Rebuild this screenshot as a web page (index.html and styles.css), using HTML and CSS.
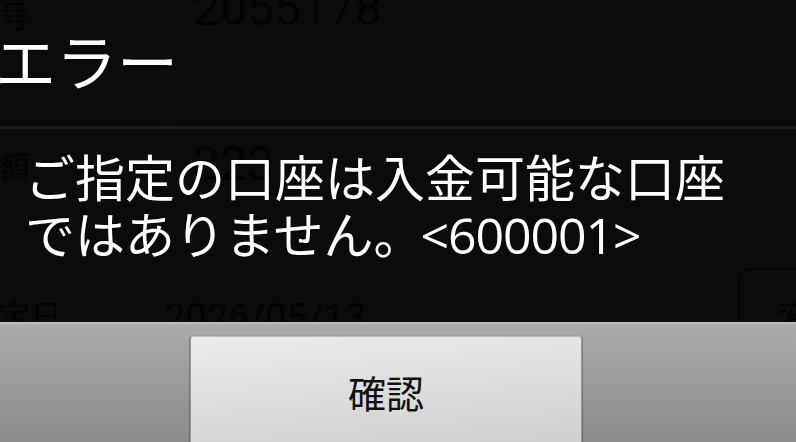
FILE: index.html
```html
<!DOCTYPE html>
<html lang="ja">
<head>
<meta charset="utf-8">
<link rel="stylesheet" href="styles.css">
</head>
<body>
<div class="screen">
  <div class="ghost">
    <div class="row row-1">
      <div class="g-label l1">号</div>
      <div class="g-value v1">2055178</div>
    </div>
    <div class="divider"></div>
    <div class="row row-2">
      <div class="g-label l2">額</div>
      <div class="g-value v2">323</div>
    </div>
    <div class="row row-3">
      <div class="g-label l3">定日</div>
      <div class="g-value v3">2026/05/13</div>
      <div class="g-box">変更</div>
    </div>
  </div>

  <div class="dialog">
    <div class="dlg-title">エラー</div>
    <div class="dlg-body">ご指定の口座は入金可能な口座<br>ではありません。<span class="code">&lt;600001&gt;</span></div>
    <div class="dlg-buttons">
      <button class="btn">確認</button>
    </div>
  </div>
</div>
</body>
</html>
```

FILE: styles.css
```css
html, body {
  margin: 0;
  padding: 0;
  background: #0b0b0b;
}

.screen {
  position: relative;
  width: 796px;
  height: 442px;
  overflow: hidden;
  background: #0b0b0b;
}

/* dimmed page behind the dialog */
.ghost {
  display: flex;
  flex-direction: column;
  color: #030303;
}

.row {
  display: grid;
  grid-template-columns: 168px 1fr;
}

.row-1 {
  height: 126px;
  background: linear-gradient(90deg, #0b0b0b 0, #0b0b0b 167px, #0d0d0d 167px, #0d0d0d 169px, #0b0b0b 169px);
}

.row-2 {
  height: 130px;
  background: linear-gradient(90deg, #0b0b0b 0, #0b0b0b 167px, #0d0d0d 167px, #0d0d0d 169px, #0b0b0b 169px);
}

.row-3 {
  grid-template-columns: 168px 1fr 100px;
  margin-right: -42px;
  height: 80px;
}

.divider {
  height: 3px;
  background: #1d1d1d;
}

.g-label {
  font-family: "Noto Sans CJK JP", sans-serif;
  font-size: 30px;
  line-height: 30px;
}

.g-value {
  font-family: Roboto, "Liberation Sans", sans-serif;
  font-size: 48px;
  line-height: 48px;
  padding-left: 25px;
}

.l1 { margin-top: -1px; }
.v1 { margin-top: -15px; }
.l2 { margin-top: 21px; }
.v2 { margin-top: 11px; }

.l3 {
  font-size: 32px;
  line-height: 32px;
  margin-top: 39px;
  margin-left: -2px;
}

.v3 {
  font-size: 38px;
  line-height: 38px;
  padding-left: 0;
  margin-left: -4px;
  margin-top: 40px;
}

.g-box {
  margin-top: 9px;
  height: 100px;
  border: 2px solid #050505;
  border-radius: 12px;
  font-family: "Noto Sans CJK JP", sans-serif;
  font-size: 32px;
  line-height: 32px;
  padding: 28px 0 0 38px;
  box-sizing: border-box;
}

/* dialog overlay */
.dialog {
  position: absolute;
  inset: 0;
  display: flex;
  flex-direction: column;
}

.dlg-title {
  height: 126px;
  box-sizing: border-box;
  padding-top: 29px;
  margin-left: -5px;
  font-family: "Noto Sans CJK JP", sans-serif;
  font-size: 61px;
  line-height: 61px;
  color: #ffffff;
}

.dlg-body {
  flex: 1;
  padding: 24px 0 0 25px;
  font-family: "Open Sans", "Noto Sans CJK JP", sans-serif;
  font-size: 50px;
  line-height: 57px;
  color: #ffffff;
}

.code {
  margin-left: -3px;
  letter-spacing: -1.1px;
}

.dlg-buttons {
  height: 120px;
  box-sizing: border-box;
  padding: 12px 0 0 190px;
  border-top: 2px solid #bcbcbc;
  background: linear-gradient(180deg, #ababab 0%, #9c9c9c 50%, #8a8a8a 100%);
}

.btn {
  display: block;
  width: 392px;
  height: 112px;
  margin: 0;
  padding: 0;
  box-sizing: border-box;
  border: 1px solid #bdbdbd;
  border-left-color: #9a9a9a;
  border-right-color: #9a9a9a;
  border-radius: 3px;
  box-shadow: -1px 0 1px rgba(0,0,0,0.25), 1px 0 1px rgba(0,0,0,0.25);
  background: linear-gradient(175deg, #ebebeb 0%, #dedede 45%, #cfcfcf 100%);
  font-family: "Noto Sans CJK JP", sans-serif;
  font-size: 38px;
  line-height: 38px;
  color: #111111;
  text-align: center;
}
```
